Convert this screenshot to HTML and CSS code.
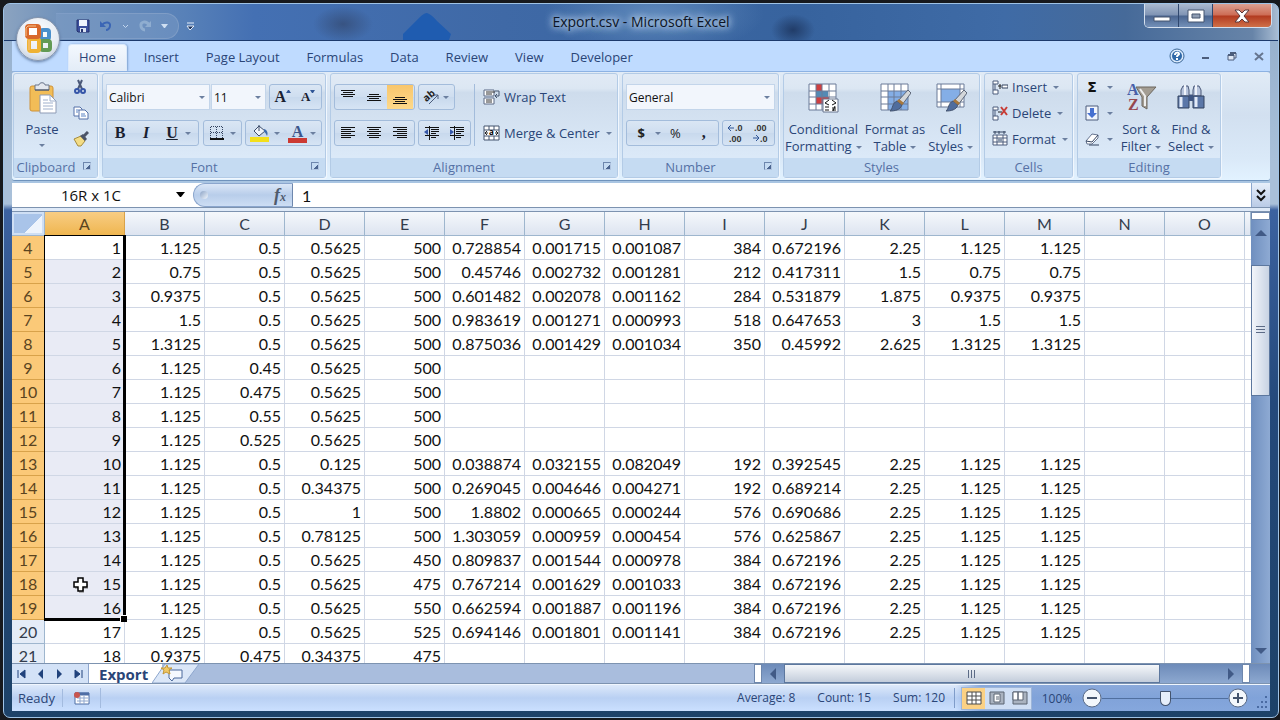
FILE: index.html
```
<!DOCTYPE html>
<html lang="en">

<head>
    <meta charset="UTF-8">
    <meta name="viewport" content="width=device-width, initial-scale=1.0">
    <title>Export.csv - Microsoft Excel</title>
    <link rel="stylesheet" href="styles.css">
</head>

<body>
    <div class="window">
        <header class="title-bar">
            <svg class="wallpaper" width="60" height="31" viewBox="0 0 60 31"><path d="M30 4 Q34 5 40 12L54 25 52 31H6V25L22 9Q27 4 30 4z" fill="#1f5cb0" /></svg>
            <div class="quick-access">
                <button title="Save"><svg width="14" height="14" viewBox="0 0 14 14"><path d="M1 1h12v12H2l-1-1z" fill="#3b4f9c" stroke="#26336f" /><path d="M3 1h8v6H3z" fill="#eef3fc" /><path d="M4 9h6v4H4z" fill="#dbe3f2" /><path d="M5 10h2v3H5z" fill="#26336f" /></svg></button>
                <button title="Undo"><svg width="14" height="14" viewBox="0 0 14 14"><path d="M3 6c3-4 9-3 8 1 0 2-2 4-4 4" fill="none" stroke="#3b66b5" stroke-width="2" /><path d="M1 2v6h6z" fill="#3b66b5" /></svg></button>
                <svg width="7" height="5" viewBox="0 0 7 5"><path d="m1 1 2.500 2.500L6 1" fill="none" stroke="#c3d6ee" /></svg>
                <button title="Redo"><svg width="14" height="14" viewBox="0 0 14 14"><path d="M11 6C8 1 2 3 3 7c0 2 2 4 4 4" fill="none" stroke="#8fadd0" stroke-width="3" /><path d="M13 2v6H7z" fill="#8fadd0" /></svg></button>
                <svg width="7" height="5" viewBox="0 0 7 5"><path d="M0 0h7L4 4H3z" fill="#cfdff2" /></svg>
            </div>
            <button class="customize" title="Customize Quick Access Toolbar"><svg width="9" height="9" viewBox="0 0 9 9"><path d="M1 1h7M1 4h7L4 8z" fill="#1c3158" stroke="#e5eefa" /></svg></button>
            <h1>Export.csv - Microsoft Excel</h1>
            <div class="window-buttons">
                <button title="Minimize"><svg width="18" height="14" viewBox="0 0 18 14"><path d="M1 8h16v4H1z" fill="#fff" stroke="#44546e" /></svg></button>
                <button title="Restore"><svg width="18" height="14" viewBox="0 0 18 14"><path d="M1 1h16v12H1z" fill="#fff" stroke="#44546e" /><path d="M5 5h8v4H5z" fill="#8f9db3" stroke="#44546e" /></svg></button>
                <button class="close" title="Close"><svg width="16" height="14" viewBox="0 0 16 14"><path d="M1 1h4l3 3 3-3h4l-5 6 5 6h-4l-3-3-3 3H1l5-6z" fill="#fff" stroke="#5c3a3c" /></svg></button>
            </div>
        </header>

        <button class="orb" title="Office Button">
            <svg width="34" height="36" viewBox="0 0 34 36">
                <g fill="none" stroke-width="4">
                    <rect x="20" y="9" width="8" height="9" rx="2" stroke="#4a8fcb" />
                    <rect x="20" y="20" width="9" height="9" rx="2" stroke="#629a54" />
                    <rect x="8" y="18" width="10" height="12" rx="2" stroke="#efb233" />
                    <rect x="6" y="5" width="12" height="11" rx="2" stroke="#d9692c" fill="#fff" />
                </g>
                <path d="M5 15V7l2-2h8M8 29V19" fill="none" stroke="#f7c48c" />
            </svg>
        </button>

        <nav class="tabs">
            <button class="active">Home</button>
            <button>Insert</button>
            <button>Page Layout</button>
            <button>Formulas</button>
            <button>Data</button>
            <button>Review</button>
            <button>View</button>
            <button>Developer</button>
            <div class="mdi-buttons">
                <button title="Help"><svg width="16" height="16" viewBox="0 0 16 16"><circle cx="8" cy="8" r="7" fill="#d9e9fb" stroke="#3c6797" /><circle cx="8" cy="8" r="5" fill="#2f68a8" /><path d="M6 7c0-3 4-3 4-1 0 1-2 1-2 3m0 1v2" fill="none" stroke="#fff" stroke-width="2" /></svg></button>
                <button title="Minimize Window"><svg width="8" height="8" viewBox="0 0 8 8"><path d="M0 5h7v2H0z" fill="#4c5d7c" /></svg></button>
                <button title="Restore Window"><svg width="10" height="9" viewBox="0 0 10 9"><path d="M3 1h6v5H7M1 3h6v5H1z" fill="#dfe8f5" stroke="#4c5d7c" /><path d="M3 1h6M1 3h6" stroke="#4c5d7c" stroke-width="2" /></svg></button>
                <button title="Close Window"><svg width="10" height="9" viewBox="0 0 10 9"><path d="m1 1 8 7M9 1 1 8" stroke="#66758f" stroke-width="2" /></svg></button>
            </div>
        </nav>

        <div class="ribbon">
            <section class="group clipboard">
                <div class="group-body">
                    <button class="big">
                        <svg width="32" height="32" viewBox="0 0 32 32"><rect x="4" y="4" width="23" height="25" rx="2" fill="#f2bd57" stroke="#cf9238" /><path d="M9 3h4c0-3 6-3 6 0h4v5H9z" fill="#e3e7ee" stroke="#69748a" /><path d="M9 8h14" stroke="#454f63" /><path d="M14 13h10l6 6v12H14z" fill="#fff" stroke="#8e9bb5" /><path d="M24 13v6h6M17 18h5M17 21h10M17 24h10M17 27h10" fill="none" stroke="#9fb0cc" /></svg>
                        <span>Paste</span><i class="arrow"></i>
                    </button>
                    <div class="stack">
                        <button title="Cut"><svg width="14" height="16" viewBox="0 0 14 16"><path d="m5 1 4 9M9 1 5 10" stroke="#4a5878" stroke-width="2" /><circle cx="4" cy="12" r="2" fill="none" stroke="#3555a8" stroke-width="2" /><circle cx="10" cy="12" r="2" fill="none" stroke="#3555a8" stroke-width="2" /></svg></button>
                        <button title="Copy"><svg width="16" height="16" viewBox="0 0 16 16"><path d="M1 2h6l2 2v7H1z" fill="#fff" stroke="#5470a8" /><path d="M6 5h6l3 3v6H6z" fill="#fff" stroke="#5470a8" /><path d="M3 5h3M3 7h2M8 9h4M8 11h5" stroke="#5a83c4" /></svg></button>
                        <button title="Format Painter"><svg width="16" height="16" viewBox="0 0 16 16"><path d="M1 8 8 5l4 5-4 5H5z" fill="#f3dc85" stroke="#a58b3c" /><path d="m7 5 5 5 2-2-4-5z" fill="#4c5468" /><path d="m11 5 4-4" stroke="#4c5468" stroke-width="3" /></svg></button>
                    </div>
                </div>
                <footer>Clipboard <button class="launcher" title="Clipboard options"></button></footer>
            </section>

            <section class="group font">
                <div class="group-body rows">
                    <div class="row">
                        <div class="combos">
                            <select class="font-name" aria-label="Font"><option>Calibri</option></select><select class="font-size" aria-label="Font size"><option>11</option></select>
                        </div>
                        <div class="button-set wide-set">
                            <button class="serif" title="Increase Font Size">A<svg width="5" height="14" viewBox="0 0 5 14"><path d="M0 3h5L3 0H2z" fill="#2f5596" /></svg></button>
                            <button class="serif shrink" title="Decrease Font Size">A<svg width="5" height="14" viewBox="0 0 5 14"><path d="M0 0h5L3 3H2z" fill="#2f5596" /></svg></button>
                        </div>
                    </div>
                    <div class="row">
                        <div class="button-set biu">
                            <button class="serif"><b>B</b></button>
                            <button class="serif"><em>I</em></button>
                            <button class="serif"><u>U</u></button>
                            <i class="arrow"></i>
                        </div>
                        <div class="button-set borders">
                            <button title="Borders"><svg width="14" height="14" viewBox="0 0 14 14"><path d="M1 .5h12M1 6.500h12M.5 1v11M6.500 1v11M12.500 1v11" stroke="#33435f" stroke-dasharray="1 1" /><path d="M0 13h14" stroke="#111" stroke-width="2" /></svg></button>
                            <i class="arrow"></i>
                        </div>
                        <div class="button-set colors">
                            <button title="Fill Color"><svg width="20" height="18" viewBox="0 0 20 18"><path d="m4 7 5-5 6 5-6 5z" fill="#eef3fb" stroke="#3d4d6b" /><path d="M9 7V1" stroke="#3d4d6b" /><path d="M14 5c4 1 4 5 3 7-1-2-1-3-3-4z" fill="#3f6cae" /><path d="M0 13h19v5H0z" fill="#f3df1c" /></svg></button>
                            <i class="arrow"></i>
                            <button class="font-color" title="Font Color">A</button>
                            <i class="arrow"></i>
                        </div>
                    </div>
                </div>
                <footer>Font <button class="launcher" title="Font options"></button></footer>
            </section>

            <section class="group alignment">
                <div class="group-body">
                    <div class="rows">
                        <div class="row">
                            <div class="button-set three">
                                <button title="Top Align"><svg width="16" height="18" viewBox="0 0 16 18"><path d="M1 2.500h14M3 4.500h10M1 6.500h14M3 8.500h10" stroke="#111" /></svg></button>
                                <button title="Middle Align"><svg width="16" height="18" viewBox="0 0 16 18"><path d="M3 6.500h10M1 8.500h14M3 10.500h10M1 12.500h14" stroke="#111" /></svg></button>
                                <button class="on" title="Bottom Align"><svg width="16" height="18" viewBox="0 0 16 18"><path d="M3 9.500h10M1 11.500h14M3 13.500h10M1 15.500h14" stroke="#111" /></svg></button>
                            </div>
                            <div class="button-set orientation">
                                <button title="Orientation"><svg width="18" height="18" viewBox="0 0 18 18"><text x="1" y="11" font-size="10" font-weight="bold" transform="rotate(-40 7 8)" fill="#222">ab</text><path d="m7 16 9-9M12 7h4v4" fill="none" stroke="#4c5d7c" /></svg></button>
                                <i class="arrow"></i>
                            </div>
                        </div>
                        <div class="row">
                            <div class="button-set three">
                                <button title="Align Left"><svg width="16" height="14" viewBox="0 0 16 14"><path d="M1 1.500h14M1 3.500h10M1 5.500h14M1 7.500h10M1 9.500h14M1 11.500h10" stroke="#111" /></svg></button>
                                <button title="Center"><svg width="16" height="14" viewBox="0 0 16 14"><path d="M1 1.500h14M3 3.500h10M1 5.500h14M3 7.500h10M1 9.500h14M3 11.500h10" stroke="#111" /></svg></button>
                                <button title="Align Right"><svg width="16" height="14" viewBox="0 0 16 14"><path d="M1 1.500h14M5 3.500h10M1 5.500h14M5 7.500h10M1 9.500h14M5 11.500h10" stroke="#111" /></svg></button>
                            </div>
                            <div class="button-set wide-set">
                                <button title="Decrease Indent"><svg width="16" height="14" viewBox="0 0 16 14"><path d="M1 1.500h14M7 3.500h8M7 5.500h8M7 7.500h5M1 9.500h14M7 11.500h5M5.500 0v14" stroke="#111" /><path d="m0 6 4-3v6z" fill="#3557a8" /></svg></button>
                                <button title="Increase Indent"><svg width="16" height="14" viewBox="0 0 16 14"><path d="M1 1.500h14M7 3.500h8M7 5.500h8M7 7.500h5M1 9.500h14M7 11.500h5M5.500 0v14" stroke="#111" /><path d="M5 6 1 3v6z" fill="#3557a8" /></svg></button>
                            </div>
                        </div>
                    </div>
                    <div class="labelled">
                        <button><svg width="17" height="16" viewBox="0 0 17 16"><path d="M1 1h10v6H1zM1 9h10v6H1z" fill="#fff" stroke="#5c6b86" /><path d="M3 3h9M3 5h6M3 11h6M3 13h6" stroke="#333" /><path d="M12 2h4v5h-3m1-2-2 2 2 2" fill="none" stroke="#44546e" /></svg>Wrap Text</button>
                        <button><svg width="17" height="16" viewBox="0 0 17 16"><path d="M1 1h15v14H1zM1 5h15M1 11h15M6 1v4M11 1v4M6 11v4M11 11v4" fill="#fff" stroke="#44546e" /><text x="6" y="10" font-size="8" font-weight="bold">a</text><path d="M2 8h3m7 0h3M4 6l-2 2 2 2m9-4 2 2-2 2" fill="none" stroke="#222" /></svg>Merge &amp; Center<i class="arrow"></i></button>
                    </div>
                </div>
                <footer>Alignment <button class="launcher" title="Alignment options"></button></footer>
            </section>

            <section class="group number">
                <div class="group-body rows">
                    <select aria-label="Number format"><option>General</option></select>
                    <div class="row">
                        <div class="button-set formats">
                            <button><b>$</b></button>
                            <i class="arrow"></i>
                            <button>%</button>
                            <button class="serif"><b>,</b></button>
                        </div>
                        <div class="button-set wide-set decimals">
                            <button title="Increase Decimal"><svg width="18" height="22" viewBox="0 0 18 22"><text x="8" y="9">.0</text><text x="2" y="20">.00</text><path d="M1 6h6M4 3 1 6l3 3" fill="none" stroke="#2f5596" /></svg></button>
                            <button title="Decrease Decimal"><svg width="18" height="22" viewBox="0 0 18 22"><text x="2" y="9">.00</text><text x="8" y="20">.0</text><path d="M1 16h6M4 13l3 3-3 3" fill="none" stroke="#2f5596" /></svg></button>
                        </div>
                    </div>
                </div>
                <footer>Number <button class="launcher" title="Number options"></button></footer>
            </section>

            <section class="group styles">
                <div class="group-body">
                    <button class="big">
                        <svg width="32" height="32" viewBox="0 0 32 32"><path d="M2 2h27v26H2z" fill="#fff" /><path d="M9 2h6v7H9zM9 15h6v7H9z" fill="#cf4040" /><path d="M9 9h12v6H9z" fill="#538ab5" /><path d="M15 15h7v7h-7z" fill="#cf4040" /><path d="M2 2h27v26H2zM2 9h27M2 15h27M2 22h27M9 2v26M15 2v26M22 2v26" fill="none" stroke="#6a7b98" /><path d="M16 17h15v13H16z" fill="#fff" stroke="#66748f" /><path d="m22 18-4 3 4 2M18 25h4M18 28h4M25 18l4 3-4 2M25 26h4M25 28h4M28 24l-2 5" fill="none" stroke="#111" /></svg>
                        <span>Conditional<br>Formatting<i class="arrow"></i></span>
                    </button>
                    <button class="big">
                        <svg width="32" height="32" viewBox="0 0 32 32"><path d="M2 2h27v26H2z" fill="#fff" /><path d="M9 9h20v19H9z" fill="#84aee6" /><path d="M2 2h27v26H2zM2 9h27M2 15h27M2 22h27M9 2v26M15 2v26M22 2v26" fill="none" stroke="#6a7b98" /><path d="m29 8 3 3-9 12-4-4z" fill="#d3d6d9" stroke="#5c6577" /><path d="m18 19 5 4c-2 5-7 6-12 6 3-2 2-8 7-10z" fill="#506d9d" stroke="#465570" /><path d="m20 17 5 4-2 2-5-4z" fill="#a8783d" /></svg>
                        <span>Format as<br>Table<i class="arrow"></i></span>
                    </button>
                    <button class="big">
                        <svg width="32" height="32" viewBox="0 0 32 32"><path d="M2 2h27v23H2z" fill="#fff" /><path d="M6 7h19v13H6z" fill="#84aee6" /><path d="M2 2h27v23H2zM2 7h27M2 20h27M6 2v23M25 2v23" fill="none" stroke="#6a7b98" /><path d="m29 8 3 3-9 12-4-4z" fill="#d3d6d9" stroke="#5c6577" /><path d="m18 19 5 4c-2 5-7 6-12 6 3-2 2-8 7-10z" fill="#506d9d" stroke="#465570" /><path d="m20 17 5 4-2 2-5-4z" fill="#a8783d" /></svg>
                        <span>Cell<br>Styles<i class="arrow"></i></span>
                    </button>
                </div>
                <footer>Styles</footer>
            </section>

            <section class="group cells">
                <div class="group-body stack">
                    <button><svg width="16" height="15" viewBox="0 0 16 15"><path d="M1 1h5v3H1zM1 10h5v4H1zM1 4v6M3 4v6" fill="#fff" stroke="#4c5d7c" /><path d="M10 5h6v3h-6z" fill="#fff" stroke="#33435f" /><path d="M6 6h3M8 4v5" stroke="#222" /></svg>Insert<i class="arrow"></i></button>
                    <button><svg width="16" height="15" viewBox="0 0 16 15"><path d="M1 1h5v3H1zM1 10h5v4H1zM1 4v6M3 4v6" fill="#fff" stroke="#4c5d7c" /><path d="M6 6h4" stroke="#222" /><path d="m9 1 6 8M15 1 9 9" stroke="#c83c36" stroke-width="2" /></svg>Delete<i class="arrow"></i></button>
                    <button><svg width="16" height="16" viewBox="0 0 16 16"><path d="M1 4h14v10H1zM1 7h14M1 11h14M5 4v10M11 4v10" fill="#fff" stroke="#4c5d7c" /><path d="M6 7h4v4H6z" fill="#8a98ad" /><path d="M1 1h13M3 0v3M7 0v3M12 0v3" stroke="#33435f" /></svg>Format<i class="arrow"></i></button>
                </div>
                <footer>Cells</footer>
            </section>

            <section class="group editing">
                <div class="group-body">
                    <div class="stack">
                        <button title="Sum"><b class="sigma">Σ</b><i class="arrow"></i></button>
                        <button title="Fill"><svg width="14" height="16" viewBox="0 0 14 16"><path d="M1 1h12v14H1z" fill="#f1f5fc" stroke="#4c5d7c" /><path d="M5 3h4v5h3l-5 5-5-5h3z" fill="#4670d0" /></svg><i class="arrow"></i></button>
                        <button title="Clear"><svg width="14" height="14" viewBox="0 0 14 14"><path d="m1 9 6-7 6 1v3l-6 6H2z" fill="#fff" stroke="#66748f" /><path d="m1 9 6 1 6-7M4 13h10" fill="none" stroke="#33435f" /></svg><i class="arrow"></i></button>
                    </div>
                    <button class="big">
                        <svg width="32" height="32" viewBox="0 0 32 32"><path d="M11 5h20l-9 10v12l-5-3v-9z" fill="#a39d93" stroke="#6d675f" /><path d="m15 7 5 7v10" fill="none" stroke="#eee" stroke-width="2" /><text x="2" y="13" font-size="16" font-family="Liberation Serif" font-weight="bold" fill="#4760a8">A</text><text x="3" y="28" font-size="16" font-family="Liberation Serif" font-weight="bold" fill="#96484f">Z</text></svg>
                        <span>Sort &amp;<br>Filter<i class="arrow"></i></span>
                    </button>
                    <button class="big">
                        <svg width="32" height="32" viewBox="0 0 32 32"><path d="M8 4h5l1 4v5h4V8l1-4h5l2 4v6H6V8z" fill="#b7c4dc" stroke="#4a5878" /><path d="M3 14h11v12H3zM18 14h11v12H18z" fill="#5b77a8" stroke="#33435f" /><path d="M14 13h4v6h-4z" fill="#3e5582" /><path d="M6 15v10M21 15v10" stroke="#e2eaf7" stroke-width="3" /><path d="M10 3v10M21 3v10" stroke="#f0f4fb" stroke-width="2" /></svg>
                        <span>Find &amp;<br>Select<i class="arrow"></i></span>
                    </button>
                </div>
                <footer>Editing</footer>
            </section>
        </div>

        <div class="formula-bar">
            <div class="name-box">
                <input type="text" value="16R x 1C" aria-label="Name box">
                <button title="Names"><svg width="9" height="6" viewBox="0 0 9 6"><path d="M0 0h9L5 5H4z" fill="#000" /></svg></button>
            </div>
            <button class="fx" title="Insert Function"><span class="knob"></span><em>f<small>x</small></em></button>
            <input class="formula" type="text" value="1" aria-label="Formula">
            <button class="expand" title="Expand"><svg width="10" height="13" viewBox="0 0 10 13"><path d="m1 1 4 4 4-4M1 7l4 4 4-4" fill="none" stroke="#111" stroke-width="2" /></svg></button>
        </div>

        <main class="sheet">
            <div class="grid">
                <table>
                    <colgroup id="cols"></colgroup>
                    <thead><tr id="letters"></tr></thead>
                    <tbody id="rows"></tbody>
                </table>
                <div class="selection"></div>
                <svg class="cursor" width="20" height="20" viewBox="0 0 20 20"><path d="M7 4h5v4h4v5h-4v4H7v-4H3V8h4z" fill="#777" opacity="0.500" /><path d="M6 2h5v4h4v5h-4v4H6v-4H2V6h4z" fill="#fff" stroke="#000" stroke-width="1.500" /></svg>
            </div>
            <div class="v-scroll">
                <div class="split"></div>
                <button title="Scroll up"><svg width="12" height="6" viewBox="0 0 12 6"><path d="m6 0 6 6H0z" fill="#415a86" /></svg></button>
                <div class="thumb"></div>
                <button title="Scroll down"><svg width="12" height="6" viewBox="0 0 12 6"><path d="M0 0h12L6 6z" fill="#415a86" /></svg></button>
            </div>
        </main>

        <div class="sheet-tabs">
            <div class="sheet-nav">
                <button title="First"><svg width="9" height="10" viewBox="0 0 9 10"><path d="M1 1v8M8 1v8L3 5z" fill="#21437c" stroke="#21437c" /></svg></button>
                <button title="Previous"><svg width="9" height="10" viewBox="0 0 9 10"><path d="M7 0v10L2 5z" fill="#21437c" /></svg></button>
                <button title="Next"><svg width="9" height="10" viewBox="0 0 9 10"><path d="M2 0v10l5-5z" fill="#21437c" /></svg></button>
                <button title="Last"><svg width="9" height="10" viewBox="0 0 9 10"><path d="M8 1v8M1 1v8l5-4z" fill="#21437c" stroke="#21437c" /></svg></button>
            </div>
            <button class="sheet-tab">Export</button>
            <button class="new-sheet" title="Insert Worksheet"><svg width="48" height="19" viewBox="0 0 48 19"><path d="M0 19 13 0h34L33 19z" fill="#dbe7f8" stroke="#8ea6cd" /><path d="M17 6h13v8h-8l-2 3-3-3z" fill="#f5f9ff" stroke="#4b689b" /><path d="m15 1 1 3 4 0-3 2 1 4-4-2-3 2 1-4-3-2h4z" fill="#f0c865" stroke="#c39736" /></svg></button>
            <div class="h-scroll">
                <div class="split"></div>
                <button title="Scroll left"><svg width="6" height="12" viewBox="0 0 6 12"><path d="M6 0v12L0 6z" fill="#415a86" /></svg></button>
                <div class="thumb"></div>
                <button title="Scroll right"><svg width="6" height="12" viewBox="0 0 6 12"><path d="M0 0v12l6-6z" fill="#415a86" /></svg></button>
                <div class="split"></div>
            </div>
        </div>

        <footer class="status-bar">
            <span class="ready">Ready</span>
            <button class="macro" title="Record Macro"><svg width="16" height="15" viewBox="0 0 16 15"><path d="M1 2h14v11H1z" fill="#fff" stroke="#4f6ea5" /><path d="M1 3h14" stroke="#4f6ea5" stroke-width="3" /><path d="M3 7h11M3 10h11M6 5v8M10 5v8" stroke="#8ea6cd" /><circle cx="3" cy="4" r="3" fill="#c8554f" /></svg></button>
            <div class="stats">
                <span>Average: 8</span>
                <span>Count: 15</span>
                <span>Sum: 120</span>
            </div>
            <div class="views">
                <button class="on" title="Normal"><svg width="16" height="14" viewBox="0 0 16 14"><path d="M1 1h14v12H1zM1 5h14M1 9h14M6 1v12M10 1v12" fill="#fff" stroke="#4a4a4a" /></svg></button>
                <button title="Page Layout"><svg width="16" height="14" viewBox="0 0 16 14"><path d="M1 1h14v12H1z" fill="#aab3c0" stroke="#5a6473" /><path d="M5 3h6v8H5z" fill="#fff" stroke="#5a6473" /><path d="M7 6h3M7 8h3" stroke="#5a6473" /></svg></button>
                <button title="Page Break Preview"><svg width="16" height="14" viewBox="0 0 16 14"><path d="M1 1h14v12H1z" fill="#aab3c0" stroke="#5a6473" /><path d="M1 1h5v8H1zM6 1h5v8H6z" fill="#fff" stroke="#5a6473" /></svg></button>
            </div>
            <label class="percent" for="zoom">100%</label>
            <button class="zoom-button" title="Zoom Out"><svg width="20" height="20" viewBox="0 0 20 20"><circle cx="10" cy="10" r="9" fill="#f3f7fc" stroke="#5b6b86" /><path d="M5 10h10" stroke="#44546e" stroke-width="2" /></svg></button>
            <input id="zoom" type="range" min="0" max="100" value="50">
            <button class="zoom-button" title="Zoom In"><svg width="20" height="20" viewBox="0 0 20 20"><circle cx="10" cy="10" r="9" fill="#f3f7fc" stroke="#5b6b86" /><path d="M5 10h10M10 5v10" stroke="#44546e" stroke-width="2" /></svg></button>
            <svg class="grip" width="12" height="14" viewBox="0 0 12 14"><path d="M9 1h2v2H9zM5 6h2v2H5zM9 6h2v2H9zM1 11h2v2H1zM5 11h2v2H5zM9 11h2v2H9z" fill="#4a6ba3" /></svg>
        </footer>
    </div>

    <script>
        const letters = 'ABCDEFGHIJKLMNO'.split('');
        const firstRow = 4;
        const lastSelected = 19;

        // one line per sheet row, columns A to M
        const data = `1 1.125 0.5 0.5625 500 0.728854 0.001715 0.001087 384 0.672196 2.25 1.125 1.125
2 0.75 0.5 0.5625 500 0.45746 0.002732 0.001281 212 0.417311 1.5 0.75 0.75
3 0.9375 0.5 0.5625 500 0.601482 0.002078 0.001162 284 0.531879 1.875 0.9375 0.9375
4 1.5 0.5 0.5625 500 0.983619 0.001271 0.000993 518 0.647653 3 1.5 1.5
5 1.3125 0.5 0.5625 500 0.875036 0.001429 0.001034 350 0.45992 2.625 1.3125 1.3125
6 1.125 0.45 0.5625 500
7 1.125 0.475 0.5625 500
8 1.125 0.55 0.5625 500
9 1.125 0.525 0.5625 500
10 1.125 0.5 0.125 500 0.038874 0.032155 0.082049 192 0.392545 2.25 1.125 1.125
11 1.125 0.5 0.34375 500 0.269045 0.004646 0.004271 192 0.689214 2.25 1.125 1.125
12 1.125 0.5 1 500 1.8802 0.000665 0.000244 576 0.690686 2.25 1.125 1.125
13 1.125 0.5 0.78125 500 1.303059 0.000959 0.000454 576 0.625867 2.25 1.125 1.125
14 1.125 0.5 0.5625 450 0.809837 0.001544 0.000978 384 0.672196 2.25 1.125 1.125
15 1.125 0.5 0.5625 475 0.767214 0.001629 0.001033 384 0.672196 2.25 1.125 1.125
16 1.125 0.5 0.5625 550 0.662594 0.001887 0.001196 384 0.672196 2.25 1.125 1.125
17 1.125 0.5 0.5625 525 0.694146 0.001801 0.001141 384 0.672196 2.25 1.125 1.125
18 0.9375 0.475 0.34375 475`.split('\n');

        document.getElementById('cols').innerHTML =
            '<col class="row-col">' + letters.map(() => '<col class="data-col">').join('') + '<col>';

        document.getElementById('letters').innerHTML =
            '<th class="corner"></th>' +
            letters.map(l => `<th class="${l === 'A' ? 'selected' : ''}">${l}</th>`).join('') + '<th></th>';

        document.getElementById('rows').innerHTML = data.map((line, i) => {
            const values = line.split(' ');
            const number = firstRow + i;
            const selected = number <= lastSelected ? 'selected' : '';
            const cells = letters.map((l, c) =>
                `<td class="${c === 0 ? selected : ''}">${values[c] || ''}</td>`).join('');
            return `<tr><th class="${selected}">${number}</th>${cells}<td></td></tr>`;
        }).join('');
    </script>
</body>

</html>
```
FILE: styles.css
```
* {
    box-sizing: border-box;
}

body {
    margin: 0;
    height: 100vh;
    padding: 3px 1px 2px 3px;
    background: #17191d;
    font-family: "Open Sans", "Noto Sans", sans-serif;
    font-size: 13px;
    color: #2a4577;
    overflow: hidden;
}

button {
    display: flex;
    align-items: center;
    justify-content: center;
    padding: 0;
    border: 0;
    background: none;
    font: inherit;
    color: inherit;
}

svg {
    flex: none;
}

.window {
    position: relative;
    display: flex;
    flex-direction: column;
    height: 100%;
    padding: 0 8px 6px;
    border: 1px solid #9fc3e6;
    border-radius: 7px;
    background: linear-gradient(#92adcb 0, #a9c0d9 160px, #a9c0d9 200px, #3c62a0 206px, #24497b 400px, #1d4268 100%);
    overflow: hidden;
}

/* title bar */

.title-bar {
    position: relative;
    display: flex;
    align-items: flex-start;
    flex: none;
    height: 37px;
    margin: 0 -8px;
    border-bottom: 1px solid #1d3a6c;
    background:
        radial-gradient(ellipse 30px 18px at 339px 20px, rgba(51, 72, 111, 0.7), transparent),
        radial-gradient(ellipse 22px 16px at 789px 26px, #213c68, transparent),
        radial-gradient(ellipse 110px 40px at 650px 10px, #5e88bb, transparent),
        linear-gradient(90deg, #8ba3c0 0, #6f91bb 60px, #5881b8 180px, #4470b3 250px, #3f69a6 500px, #37639e 800px, #3f6ba6 1000px, #466a99 88%, #6784a8 98%, #a9bdd3 100%);
}

.wallpaper {
    position: absolute;
    top: 5px;
    left: 393px;
}

.quick-access {
    display: flex;
    align-items: center;
    gap: 9px;
    height: 26px;
    margin: 9px 0 0 52px;
    padding: 0 10px 0 20px;
    border: 1px solid #7f9dc6;
    border-left: 0;
    border-radius: 0 13px 13px 0;
    background: rgba(130, 160, 200, 0.4);
}

.customize {
    margin: 18px 0 0 7px;
}

.title-bar h1 {
    position: absolute;
    top: 8px;
    left: 0;
    right: 0;
    margin: 0;
    font-size: 14px;
    font-weight: normal;
    line-height: 20px;
    text-align: center;
    color: #0c1424;
    text-shadow: 0 0 6px #c5d8ee, 0 0 8px #c5d8ee, 0 0 10px #a9c4e4;
}

.window-buttons {
    display: flex;
    height: 24px;
    margin: 0 6px 0 auto;
    border: 1px solid #d5e0ee;
    border-top: 0;
    border-radius: 0 0 5px 5px;
    overflow: hidden;
}

.window-buttons button {
    width: 34px;
    border-right: 1px solid #2f476e;
    background: linear-gradient(#aab9cf, #7f94b4 48%, #4a6590 52%, #7390b8);
}

.window-buttons .close {
    width: 58px;
    border-right: 0;
    background: linear-gradient(#dca091, #cd6c55 48%, #b23a20 52%, #cf7048);
}

.orb {
    position: absolute;
    z-index: 1;
    top: 13px;
    left: 12px;
    width: 44px;
    height: 44px;
    border: 1px solid #8796ad;
    border-radius: 50%;
    background: radial-gradient(circle at 50% 35%, #fff, #e5ebf3 60%, #aebccf);
    box-shadow: 0 1px 3px #5c779e;
}

/* ribbon */

.tabs {
    display: flex;
    align-items: flex-end;
    gap: 7px;
    flex: none;
    height: 30px;
    padding-left: 56px;
    background: #bfdbff;
}

.tabs > button {
    height: 27px;
    padding: 0 10px 2px;
    line-height: 18px;
}

.tabs > .active {
    border: 1px solid #dceafb;
    border-bottom: 0;
    border-radius: 4px 4px 0 0;
    background: linear-gradient(#f3f8fe, #e3ecf7);
    box-shadow: 1px 0 2px #7fa0cf;
}

.mdi-buttons {
    display: flex;
    align-items: center;
    gap: 17px;
    height: 26px;
    margin: 0 6px 2px auto;
}

.ribbon {
    display: flex;
    gap: 4px;
    flex: none;
    height: 110px;
    padding: 1px;
    border-top: 1px solid #8db2e3;
    border-bottom: 1px solid #6f93bc;
    border-radius: 3px;
    background: linear-gradient(#e1ebf6, #d2e0f0 40%, #dae9f8 80%, #e2f2ff);
}

.group {
    display: flex;
    flex-direction: column;
    flex: none;
    height: 105px;
    border: 1px solid #b3cbe6;
    border-radius: 3px;
    background: linear-gradient(#e1eaf5, #dce7f3 14%, #cedcec 18%, #dbe9f8 80%);
    box-shadow: 1px 1px 0 #f1f7fe;
}

.group footer {
    position: relative;
    flex: none;
    height: 19px;
    line-height: 19px;
    text-align: center;
    color: #5571a5;
    background: #c5dbf2;
}

.launcher {
    position: absolute;
    top: 4px;
    right: 6px;
    width: 8px;
    height: 8px;
    border: 1px solid #6d86ad;
    border-right-color: #b0c4e0;
    border-bottom-color: #b0c4e0;
    background: linear-gradient(135deg, transparent 60%, #4c6590 60%);
}

.group-body {
    display: flex;
    flex: 1;
    min-height: 0;
    padding: 0 3px;
}

.clipboard { width: 85px; }
.font { width: 224px; }
.alignment { width: 288px; }
.number { width: 157px; }
.styles { width: 197px; }
.cells { width: 89px; }
.editing { width: 144px; }

.clipboard footer {
    padding-right: 19px;
}

.font footer,
.alignment footer,
.number footer {
    padding-right: 20px;
}

.arrow {
    display: inline-block;
    flex: none;
    border: 3px solid transparent;
    border-top-color: #6b7f9f;
    border-bottom: 0;
}

.big {
    flex-direction: column;
    justify-content: flex-start;
    align-self: flex-start;
    padding-top: 8px;
    line-height: 17px;
    text-align: center;
}

.big > svg {
    margin-bottom: 7px;
}

.big span {
    white-space: nowrap;
}

.big .arrow {
    margin-left: 4px;
    vertical-align: middle;
}

.clipboard .big {
    width: 50px;
}

.clipboard .big > .arrow {
    margin: 6px 0 0;
}

.stack {
    display: flex;
    flex-direction: column;
}

.stack button {
    justify-content: flex-start;
    gap: 4px;
    height: 26px;
}

.clipboard .stack {
    padding-left: 6px;
}

.cells .stack {
    padding-left: 7px;
}

.cells .arrow,
.labelled .arrow {
    margin-left: 2px;
}

.rows {
    display: flex;
    flex-direction: column;
    gap: 10px;
    padding-top: 10px;
}

.row {
    display: flex;
    justify-content: space-between;
    gap: 3px;
}

.combos {
    display: flex;
    gap: 1px;
}

select {
    height: 26px;
    padding: 0 2px;
    border: 1px solid #c3d5ea;
    border-radius: 0;
    appearance: none;
    background: #f2f6fc url("data:image/svg+xml,%3Csvg xmlns='http://www.w3.org/2000/svg' width='6' height='3'%3E%3Cpath d='M0 0h6L3 3z' fill='%236b7f9f'/%3E%3C/svg%3E") no-repeat right 4px center;
    font-family: inherit;
    font-size: 12px;
    color: #111;
}

.font-name {
    width: 104px;
}

.font-size {
    width: 55px;
}

.button-set {
    display: flex;
    align-items: stretch;
    height: 26px;
    border: 1px solid #a3bcdb;
    border-radius: 3px;
    background: linear-gradient(#dae6f4, #cfdef0 48%, #c8d9ed 52%, #d6e4f4);
}

.button-set .arrow {
    align-self: center;
    margin-right: 5px;
}

.button-set button {
    width: 26px;
}

.button-set .on {
    background: linear-gradient(#f8c66c, #fdd98b);
}

.wide-set {
    width: 53px;
}

.biu {
    width: 93px;
}

.borders {
    width: 39px;
}

.colors {
    width: 77px;
}

.colors button {
    width: 30px;
}

.three {
    width: 81px;
}

.orientation {
    width: 37px;
}

.serif {
    font-family: "Liberation Serif", serif;
    font-size: 16px;
    font-weight: bold;
    color: #1a2130;
}

.serif.shrink {
    font-size: 13px;
}

.font-color {
    align-self: center;
    height: 18px;
    margin: 2px 3px 0;
    border-bottom: 5px solid #cc3a33;
    font-family: "Liberation Serif", serif;
    font-size: 16px;
    font-weight: bold;
    line-height: 13px;
    color: #3c568b;
}

.colors .font-color {
    width: 20px;
}

.alignment .row {
    justify-content: flex-start;
}

.labelled {
    display: flex;
    flex-direction: column;
    align-self: flex-start;
    gap: 10px;
    margin: 10px 0 0 3px;
    padding-left: 8px;
    border-left: 1px solid #a3bcdb;
}

.labelled button {
    justify-content: flex-start;
    gap: 4px;
    height: 26px;
    white-space: nowrap;
}

.number select {
    width: 149px;
}

.formats {
    width: 93px;
    color: #222;
}

.formats button {
    flex: 1;
}

.formats .arrow {
    margin-right: 0;
}

.decimals text {
    font-family: "Liberation Sans", sans-serif;
    font-size: 9px;
    font-weight: bold;
    fill: #333;
}

.styles .group-body {
    gap: 3px;
    padding: 0 1px;
}

.editing .group-body {
    gap: 6px;
    padding-left: 7px;
}

.editing .big {
    width: 44px;
}

.sigma {
    width: 14px;
    font-family: "DejaVu Sans", sans-serif;
    font-size: 14px;
    color: #111;
}

.editing .stack button {
    gap: 8px;
}

/* formula bar */

.formula-bar {
    display: flex;
    flex: none;
    height: 27px;
    margin-bottom: 3px;
    border-top: 2px solid #a9c5e2;
    border-bottom: 1px solid #7d93b0;
    background: #fff;
    box-shadow: 0 3px 0 #dfeaf8;
    color: #111;
}

.formula-bar input {
    min-width: 0;
    padding: 0;
    border: 0;
    background: none;
    font-family: inherit;
    font-size: 15px;
    color: #111;
}

.name-box {
    display: flex;
    width: 181px;
    padding-right: 8px;
}

.name-box input {
    flex: 1;
    padding-right: 6px;
    text-align: center;
}

.fx {
    justify-content: space-between;
    width: 100px;
    padding: 0 6px 0 6px;
    border: 1px solid #8ba6cd;
    border-right-color: #6e87ad;
    border-radius: 12px 0 0 12px;
    background: linear-gradient(#dbe7f7, #b8cdea 50%, #cddef4);
}

.knob {
    width: 8px;
    height: 8px;
    border-radius: 50%;
    background: linear-gradient(135deg, #8ba3c6, #f2f7fd);
}

.fx em {
    font-family: "Liberation Serif", serif;
    font-size: 18px;
    font-weight: bold;
    color: #4f5a6c;
}

.fx small {
    font-size: 12px;
}

.formula-bar .formula {
    flex: 1;
    padding-left: 9px;
    font-family: Lato, sans-serif;
    font-size: 16px;
}

.expand {
    width: 19px;
    border-left: 1px solid #8ba6cd;
    background: linear-gradient(#e7effa, #b9cbe6);
}

/* sheet */

.sheet {
    display: flex;
    flex: 1;
    min-height: 0;
    border-top: 1px solid #7d93b0;
    background: #fff;
}

.grid {
    position: relative;
    flex: 1;
    min-width: 0;
    overflow: hidden;
}

table {
    width: 100%;
    table-layout: fixed;
    border-collapse: separate;
    border-spacing: 0;
    font-family: Lato, Carlito, sans-serif;
    font-size: 16px;
    line-height: 23px;
    color: #111;
}

.row-col {
    width: 33px;
}

.data-col {
    width: 80px;
}

td,
th {
    height: 24px;
    padding: 0;
    border-right: 1px solid #d0d7e5;
    border-bottom: 1px solid #d0d7e5;
    font-weight: normal;
}

td {
    padding-right: 3px;
    text-align: right;
}

td:last-child {
    border-right: 0;
}

th {
    border-color: #9eb6ce;
    color: #333c4c;
}

thead th {
    background: linear-gradient(#f5f8fc, #dde4f0);
}

tbody th {
    background: #e4ecf7;
}

tbody th.selected,
thead th.selected {
    border-color: #d8a24a;
    background: #fbc978;
    color: #5a4420;
}

thead th.selected {
    background: linear-gradient(#f8cd84, #efb650);
}

thead .corner {
    background: linear-gradient(135deg, #a9c4e9 60%, #eef4fc 60%);
    box-shadow: inset 0 0 0 2px #cfdff4;
}

td.selected {
    background: #e9ebf5;
}

tr:first-child td.selected {
    background: #fff;
}

/* lies over A4:A19 */
.selection {
    position: absolute;
    top: 23px;
    left: 32px;
    width: 82px;
    height: 386px;
    border: 1px solid #000;
    border-right-width: 3px;
    border-bottom-width: 3px;
}

.selection::after {
    content: "";
    position: absolute;
    right: -4px;
    bottom: -4px;
    width: 6px;
    height: 6px;
    border: 1px solid #fff;
    border-width: 1px 0 0 1px;
    background: #000;
}

.cursor {
    position: absolute;
    top: 364px;
    left: 60px;
}

.v-scroll {
    display: flex;
    flex-direction: column;
    flex: none;
    width: 19px;
    background: linear-gradient(90deg, #6f8fbf, #8eaad3);
}

.split {
    flex: none;
    border: 1px solid #6e87ad;
    background: #fff;
}

.v-scroll .split {
    height: 8px;
}

.v-scroll button {
    height: 25px;
}

.v-scroll .thumb {
    height: 131px;
    margin: 20px 0 auto;
    border: 1px solid #5c779e;
    background: repeating-linear-gradient(#5c6b86 0 1px, transparent 1px 3px) center / 9px 9px no-repeat, linear-gradient(90deg, #f2f5fa, #c8d3e3);
}

/* sheet tabs */

.sheet-tabs {
    display: flex;
    flex: none;
    height: 21px;
    border-top: 1px solid #7d93b0;
    border-bottom: 1px solid #7d93b0;
    background: #a9bddd;
}

.sheet-nav {
    display: flex;
    justify-content: space-around;
    width: 77px;
    border-right: 1px solid #8ea6cd;
    background: #d3e2f7;
}

.sheet-tab {
    padding: 0 14px 0 10px;
    background: #fff;
    font-size: 15px;
    font-weight: bold;
    line-height: 18px;
}

.new-sheet {
    margin-left: -10px;
}

.h-scroll {
    display: flex;
    width: 516px;
    margin-left: auto;
    padding-right: 20px;
    background: linear-gradient(#6d8bb9, #8da8d0);
}

.h-scroll .split {
    width: 8px;
}

.h-scroll button {
    width: 22px;
}

.h-scroll .thumb {
    flex: 0 0 376px;
    margin-right: auto;
    border: 1px solid #5c779e;
    background: repeating-linear-gradient(90deg, #5c6b86 0 1px, transparent 1px 3px) center / 9px 8px no-repeat, linear-gradient(#f5f7fa, #c3cddb);
}

/* status bar */

.status-bar {
    display: flex;
    align-items: center;
    flex: none;
    height: 27px;
    border-top: 1px solid #f0f6fe;
    background: linear-gradient(90deg, transparent 75%, rgba(104, 143, 206, 0.7) 77%), linear-gradient(#dde9fa, #b9d0f3 50%, #cbe0ff);
}

.ready {
    width: 51px;
    padding-left: 6px;
    border-right: 1px solid #a3bbdf;
}

.macro {
    width: 38px;
    height: 20px;
    border-right: 1px solid #a3bbdf;
}

.stats {
    display: flex;
    gap: 22px;
    margin-left: auto;
    padding-right: 9px;
    border-right: 1px solid #7f9cc9;
    font-size: 12px;
    line-height: 20px;
}

.views {
    display: flex;
    margin-left: 6px;
    border: 1px solid #9db5d8;
    background: #d0dff4;
}

.views button {
    width: 23px;
    height: 21px;
}

.views .on {
    background: #fbd184;
}

.percent {
    width: 50px;
    text-align: center;
    font-size: 12px;
}

#zoom {
    width: 126px;
    height: 20px;
    margin: 0;
    appearance: none;
    background: linear-gradient(#506f9f, #506f9f) center / 100% 1px no-repeat;
}

#zoom::-webkit-slider-thumb {
    appearance: none;
    width: 11px;
    height: 15px;
    border: 1px solid #44546e;
    border-radius: 1px 1px 6px 6px;
    background: #e6eefa;
}

.grip {
    align-self: flex-end;
    margin: 0 2px 2px 8px;
}
```
